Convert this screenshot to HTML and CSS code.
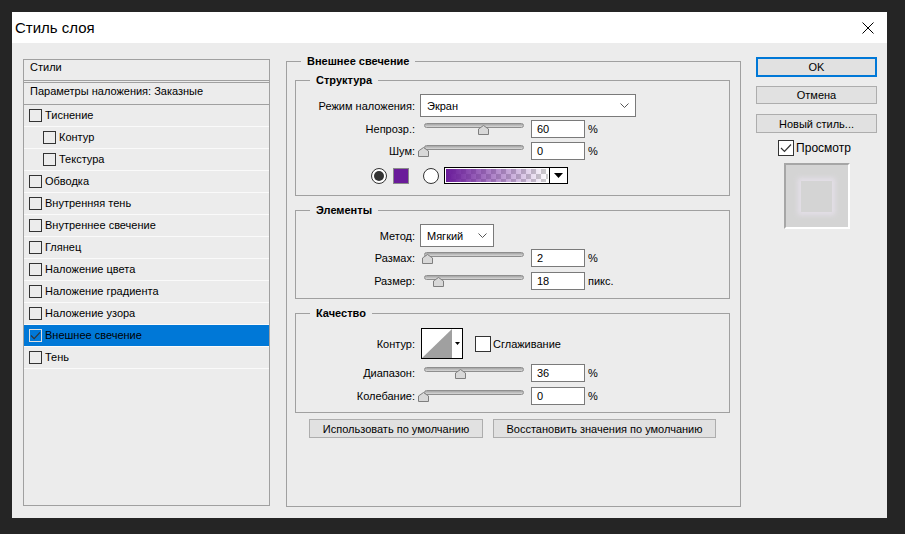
FILE: index.html
```html
<!DOCTYPE html>
<html lang="ru">
<head>
    <meta charset="UTF-8">
    <title>Стиль слоя</title>
    <link rel="stylesheet" href="styles.css">
</head>
<body>
    <svg class="defs" width="0" height="0">
        <symbol id="thumb" viewBox="0 0 11 10">
            <path d="M0.5 4 L5.5 0.5 L10.5 4 V9.5 H0.5 Z" fill="#d8d8d8" stroke="#7e7e7e"/>
        </symbol>
        <symbol id="chev" viewBox="0 0 9 5">
            <polyline points="0.5,0.5 4.5,4.5 8.5,0.5" fill="none" stroke="#555"/>
        </symbol>
        <symbol id="tick" viewBox="0 0 12 10">
            <polyline points="1,5 4.5,8.5 11,1.5" fill="none" stroke="#333" stroke-width="1.2"/>
        </symbol>
    </svg>

    <div class="dialog">
        <div class="titlebar">
            <span class="title">Стиль слоя</span>
            <svg class="close" width="12" height="12" viewBox="0 0 12 12"><path d="M0.5 0.5 L11.5 11.5 M11.5 0.5 L0.5 11.5" stroke="#000"/></svg>
        </div>

        <div class="content">
            <div class="styles-panel">
                <div class="panel-head">Стили</div>
                <div class="panel-blend">Параметры наложения: Заказные</div>
                <div class="style-row"><span class="box"></span>Тиснение</div>
                <div class="style-row sub"><span class="box"></span>Контур</div>
                <div class="style-row sub"><span class="box"></span>Текстура</div>
                <div class="style-row"><span class="box"></span>Обводка</div>
                <div class="style-row"><span class="box"></span>Внутренняя тень</div>
                <div class="style-row"><span class="box"></span>Внутреннее свечение</div>
                <div class="style-row"><span class="box"></span>Глянец</div>
                <div class="style-row"><span class="box"></span>Наложение цвета</div>
                <div class="style-row"><span class="box"></span>Наложение градиента</div>
                <div class="style-row"><span class="box"></span>Наложение узора</div>
                <div class="style-row active"><span class="box"><svg width="11" height="9"><use href="#tick"/></svg></span>Внешнее свечение</div>
                <div class="style-row"><span class="box"></span>Тень</div>
            </div>

            <fieldset class="group outer">
                <legend>Внешнее свечение</legend>
                <div class="outer-body">
                    <fieldset class="group">
                        <legend>Структура</legend>
                        <div class="group-body structure">
                            <div class="row">
                                <span class="lbl">Режим наложения:</span>
                                <div class="select wide">Экран<svg width="9" height="5"><use href="#chev"/></svg></div>
                            </div>
                            <div class="row gap3">
                                <span class="lbl">Непрозр.:</span>
                                <div class="slider"><div class="track"></div><svg class="thumb" style="left: 54px"><use href="#thumb"/></svg></div>
                                <div class="num">60</div><span class="unit">%</span>
                            </div>
                            <div class="row gap4">
                                <span class="lbl">Шум:</span>
                                <div class="slider"><div class="track"></div><svg class="thumb" style="left: -6px"><use href="#thumb"/></svg></div>
                                <div class="num">0</div><span class="unit">%</span>
                            </div>
                            <div class="color-row">
                                <svg class="radio" width="16" height="16" viewBox="0 0 16 16"><circle cx="8" cy="8" r="7.5" fill="#fff" stroke="#333"/><circle cx="8" cy="8" r="5" fill="#333"/></svg>
                                <span class="swatch"></span>
                                <svg class="radio second" width="16" height="16" viewBox="0 0 16 16"><circle cx="8" cy="8" r="7.5" fill="#fff" stroke="#333"/></svg>
                                <div class="gradient"><span class="ramp"></span><span class="drop"><svg width="9" height="5" viewBox="0 0 9 5"><path d="M0 0 H9 L4.5 5 Z" fill="#000"/></svg></span></div>
                            </div>
                        </div>
                    </fieldset>

                    <fieldset class="group spaced">
                        <legend>Элементы</legend>
                        <div class="group-body elements">
                            <div class="row">
                                <span class="lbl">Метод:</span>
                                <div class="select narrow">Мягкий<svg width="9" height="5"><use href="#chev"/></svg></div>
                            </div>
                            <div class="row gap2">
                                <span class="lbl">Размах:</span>
                                <div class="slider"><div class="track"></div><svg class="thumb" style="left: -2px"><use href="#thumb"/></svg></div>
                                <div class="num">2</div><span class="unit">%</span>
                            </div>
                            <div class="row gap5">
                                <span class="lbl">Размер:</span>
                                <div class="slider"><div class="track"></div><svg class="thumb" style="left: 9px"><use href="#thumb"/></svg></div>
                                <div class="num">18</div><span class="unit">пикс.</span>
                            </div>
                        </div>
                    </fieldset>

                    <fieldset class="group spaced">
                        <legend>Качество</legend>
                        <div class="group-body quality">
                            <div class="row">
                                <span class="lbl">Контур:</span>
                                <div class="contour">
                                    <svg width="30" height="29" viewBox="0 0 30 29"><path d="M0 29 L30 0 V29 Z" fill="#a0a0a0"/></svg>
                                    <span class="contour-drop"><svg width="5" height="3" viewBox="0 0 5 3"><path d="M0 0 H5 L2.5 3 Z" fill="#000"/></svg></span>
                                </div>
                                <span class="check white"></span><span class="check-text">Сглаживание</span>
                            </div>
                            <div class="row gap5">
                                <span class="lbl">Диапазон:</span>
                                <div class="slider"><div class="track"></div><svg class="thumb" style="left: 31px"><use href="#thumb"/></svg></div>
                                <div class="num">36</div><span class="unit">%</span>
                            </div>
                            <div class="row gap5">
                                <span class="lbl">Колебание:</span>
                                <div class="slider"><div class="track"></div><svg class="thumb" style="left: -6px"><use href="#thumb"/></svg></div>
                                <div class="num">0</div><span class="unit">%</span>
                            </div>
                        </div>
                    </fieldset>

                    <div class="defaults">
                        <button class="btn use-default">Использовать по умолчанию</button>
                        <button class="btn restore-default">Восстановить значения по умолчанию</button>
                    </div>
                </div>
            </fieldset>

            <div class="actions">
                <button class="btn ok">OK</button>
                <button class="btn cancel">Отмена</button>
                <button class="btn new-style">Новый стиль...</button>
                <div class="preview-toggle">
                    <span class="check white"><svg width="12" height="10"><use href="#tick"/></svg></span><span class="check-text">Просмотр</span>
                </div>
                <div class="preview"><span class="preview-layer"></span></div>
            </div>
        </div>
    </div>
</body>
</html>
```

FILE: styles.css
```css
* { margin: 0; padding: 0; box-sizing: border-box; }
body { background: #252525; padding: 12px; font-family: "Liberation Sans", Arial, sans-serif; font-size: 11px; color: #000; }
.defs { position: absolute; width: 0; height: 0; overflow: hidden; }

.dialog { width: 875px; height: 506px; background: #ececec; }
.titlebar { height: 31px; background: #fff; display: flex; align-items: center; justify-content: space-between; padding: 0 13px 0 3px; }
.title { font-size: 15px; }
.content { display: flex; align-items: flex-start; padding: 11px 0 0 11px; }

/* left list of layer styles */
.styles-panel { width: 247px; height: 447px; margin-top: 5px; border: 1px solid #a0a0a0; }
.panel-head { height: 21px; line-height: 14px; padding: 0 6px; border-bottom: 1px solid #a0a0a0; }
.panel-blend { height: 23px; margin-top: 1px; line-height: 14px; padding: 1px 6px 0; border-top: 1px solid #a0a0a0; border-bottom: 1px solid #a0a0a0; }
.style-row { height: 22px; display: flex; align-items: center; padding: 0 0 1px 5px; border-bottom: 1px solid #fafafa; }
.style-row.sub { padding-left: 19px; }
.style-row.active { background: #0078d7; }
.box { width: 13px; height: 13px; border: 1px solid #333; margin-right: 3px; display: flex; align-items: center; justify-content: center; }
.style-row.active .box { border-color: #e0e0e0; }

/* middle group boxes */
fieldset.group { border: 1px solid #a0a0a0; min-width: 0; }
fieldset.group legend { font-weight: bold; line-height: 14px; padding: 0 6px; margin-left: 14px; }
fieldset.spaced { margin-top: 7px; }
.outer { width: 455px; height: 453px; margin-left: 16px; }
.outer-body { padding: 5px 10px 0 8px; }
.structure { padding: 7px 0 11px; }
.elements { padding: 7px 0 8px; }
.quality { padding: 8px 0 7px; }

.row { display: flex; align-items: center; height: 18px; }
.row:first-child { height: auto; }
.row.gap2 { margin-top: 2px; }
.row.gap3 { margin-top: 3px; }
.row.gap4 { margin-top: 4px; }
.row.gap5 { margin-top: 5px; }
.lbl { width: 119px; margin-right: 5px; text-align: right; white-space: nowrap; }

.select { height: 23px; border: 1px solid #7a7a7a; background: #fff; display: flex; align-items: center; justify-content: space-between; padding: 0 6px; }
.select.wide { width: 216px; }
.select.narrow { width: 74px; }

.slider { position: relative; width: 100px; height: 14px; margin-left: 4px; }
.track { height: 5px; margin-top: 1px; border: 1px solid #8e8e8e; border-radius: 3px; background: linear-gradient(#a4a4a4, #d8d8d8); }
.thumb { position: absolute; top: 3px; width: 11px; height: 10px; }
.num { width: 54px; height: 18px; margin-left: 7px; border: 1px solid #7a7a7a; background: #fff; padding-left: 5px; line-height: 16px; }
.unit { margin-left: 3px; }

.color-row { display: flex; align-items: center; margin-top: 7px; padding-left: 75px; height: 17px; }
.swatch { width: 16px; height: 16px; margin-left: 6px; background: #6a1b9a; border: 1px solid #8a8a8a; }
.radio.second { margin-left: 14px; }
.gradient { display: flex; width: 124px; height: 17px; margin-left: 5px; border: 1px solid #000; background: #fff; }
.ramp { flex: 1; margin: 1px; background: linear-gradient(to right, #6a1b9a, rgba(106, 27, 154, 0)), repeating-conic-gradient(#cdcdcd 0 25%, #fff 0 50%) 0 0 / 10px 10px; }
.drop { width: 18px; border-left: 1px solid #000; display: flex; align-items: center; justify-content: center; }

.contour { width: 42px; height: 31px; margin-left: 1px; border: 1px solid #000; background: #fff; display: flex; }
.contour-drop { flex: 1; display: flex; align-items: center; justify-content: center; }
.check { width: 16px; height: 16px; border: 1px solid #333; display: flex; align-items: center; justify-content: center; }
.check.white { background: #fff; }
.quality .check { margin-left: 12px; }
.check-text { margin-left: 2px; }

.btn { font-family: inherit; font-size: 11px; color: #000; background: #e1e1e1; border: 1px solid #adadad; height: 19px; }
.defaults { display: flex; gap: 10px; margin: 6px 0 0 14px; }
.use-default { width: 174px; }
.restore-default { width: 223px; }

/* right column */
.actions { width: 121px; margin: 3px 0 0 15px; display: flex; flex-direction: column; }
.ok { height: 20px; border: 2px solid #0078d7; }
.cancel { height: 18px; margin-top: 9px; }
.new-style { height: 19px; margin-top: 10px; }
.preview-toggle { display: flex; align-items: center; justify-content: center; margin-top: 7px; padding-right: 4px; font-size: 12px; }
.preview { align-self: center; width: 66px; height: 66px; margin-top: 7px; background: #d4d4d4; border: 2px solid #a6a6a6; border-right-color: #fff; border-bottom-color: #fff; display: flex; align-items: center; justify-content: center; }
.preview-layer { width: 31px; height: 31px; background: #d4d4d4; box-shadow: 0 0 5px 3px #e4dfe8; }
```
